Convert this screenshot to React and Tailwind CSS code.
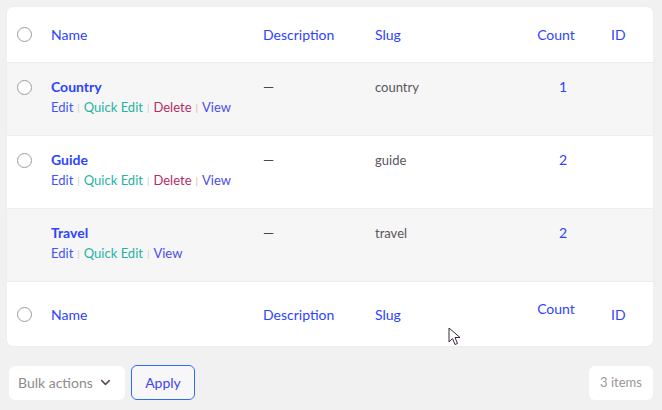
import React from 'react';
import { LuChevronDown } from 'react-icons/lu';

const cols = 'grid grid-cols-[34px_212px_112px_152px_84px_1fr]';

const rows = [
  { name: 'Country', slug: 'country', count: 1, del: true, bg: 'bg-[#f6f6f6]' },
  { name: 'Guide', slug: 'guide', count: 2, del: true, bg: 'bg-white' },
  { name: 'Travel', slug: 'travel', count: 2, del: false, bg: 'bg-[#f6f6f6]' },
];

const Radio = () => (
  <span className="block w-[15px] h-[15px] rounded-full border border-[#9a9ca1] bg-white" />
);

const Sep = () => <span className="mx-[4px] text-[10px] text-[#c9cdd2]">|</span>;

const HeadRow = ({ footer }) => (
  <div className={`${cols} h-[55px] items-center text-[14px] text-[#2d44ff]`}>
    <div className="flex justify-center pl-[1px]">
      <Radio />
    </div>
    <div className="pl-[10px]">Name</div>
    <div className="pl-[10px]">Description</div>
    <div className="pl-[10px]">Slug</div>
    <div className={`text-center pr-[6px] ${footer ? 'mb-[12px]' : ''}`}>Count</div>
    <div className="pl-[10px]">ID</div>
  </div>
);

const Cursor = () => (
  <svg width="14" height="20" viewBox="0 0 14 20" className="absolute left-[448px] top-[327px]">
    <path
      d="M1 1 L1 15 L4.5 11.5 L7 17.5 L9.5 16.5 L7 10.5 L12 10.5 Z"
      fill="#fff"
      stroke="#3a2a3c"
      strokeWidth="1"
      strokeLinejoin="round"
    />
  </svg>
);

export default function App() {
  return (
    <div
      className="relative w-[662px] h-[410px] bg-[#f1f1f1] pt-[7px] px-[7px] text-[#3c434a]"
      style={{ fontFamily: 'Lato, "Noto Sans", sans-serif' }}
    >
      <div className="w-[646px] bg-white rounded-[6px] overflow-hidden shadow-[0_0_3px_rgba(0,0,0,0.04)]">
        <div className="border-b border-[#ececec]">
          <HeadRow />
        </div>
        {rows.map((r) => (
          <div key={r.name} className={`${cols} h-[73px] border-b border-[#ececec] ${r.bg}`}>
            <div className="flex justify-center pl-[1px] pt-[17px]">{r.del && <Radio />}</div>
            <div className="pl-[10px] pt-[14px]">
              <div className="text-[14px] leading-5 font-bold text-[#2d44ff]">{r.name}</div>
              <div className="text-[13px] leading-5 flex items-center">
                <span className="text-[#3f55f5]">Edit</span>
                <Sep />
                <span className="text-[#26b3a3]">Quick Edit</span>
                <Sep />
                {r.del && (
                  <>
                    <span className="text-[#b42c66]">Delete</span>
                    <span className="mx-[4px] text-[10px] text-[#e3b49a]">|</span>
                  </>
                )}
                <span className="text-[#4a4cf0]">View</span>
              </div>
            </div>
            <div className="pl-[10px] pt-[14px] text-[14px] leading-5 text-[#4a4450]">—</div>
            <div className="pl-[10px] pt-[14px] text-[13px] leading-5 text-[#5b5560]">{r.slug}</div>
            <div className="pt-[14px] pl-[8px] text-center text-[14px] leading-5 text-[#2d44ff]">{r.count}</div>
            <div />
          </div>
        ))}
        <div className="h-[64px] flex items-center">
          <div className="w-full">
            <HeadRow footer />
          </div>
        </div>
      </div>

      <div className="flex items-center mt-[19px] pl-[2px] pr-[2px]">
        <div className="w-[116px] h-[34px] bg-white rounded-[6px] flex items-center justify-between pl-[9px] pr-[12px] text-[14px] text-[#8f8a8d]">
          <span>Bulk actions</span>
          <LuChevronDown size={15} className="text-[#5a4e52]" strokeWidth={2.5} />
        </div>
        <button className="ml-[6px] w-[64px] h-[35px] rounded-[6px] border border-[#2f6df0] text-[14px] text-[#3a46f5] bg-[#f7f7f9]">
          Apply
        </button>
        <div className="ml-auto w-[64px] h-[34px] bg-white rounded-[6px] flex items-center justify-center text-[13px] text-[#9a9597]">
          3 items
        </div>
      </div>
      <Cursor />
    </div>
  );
}
